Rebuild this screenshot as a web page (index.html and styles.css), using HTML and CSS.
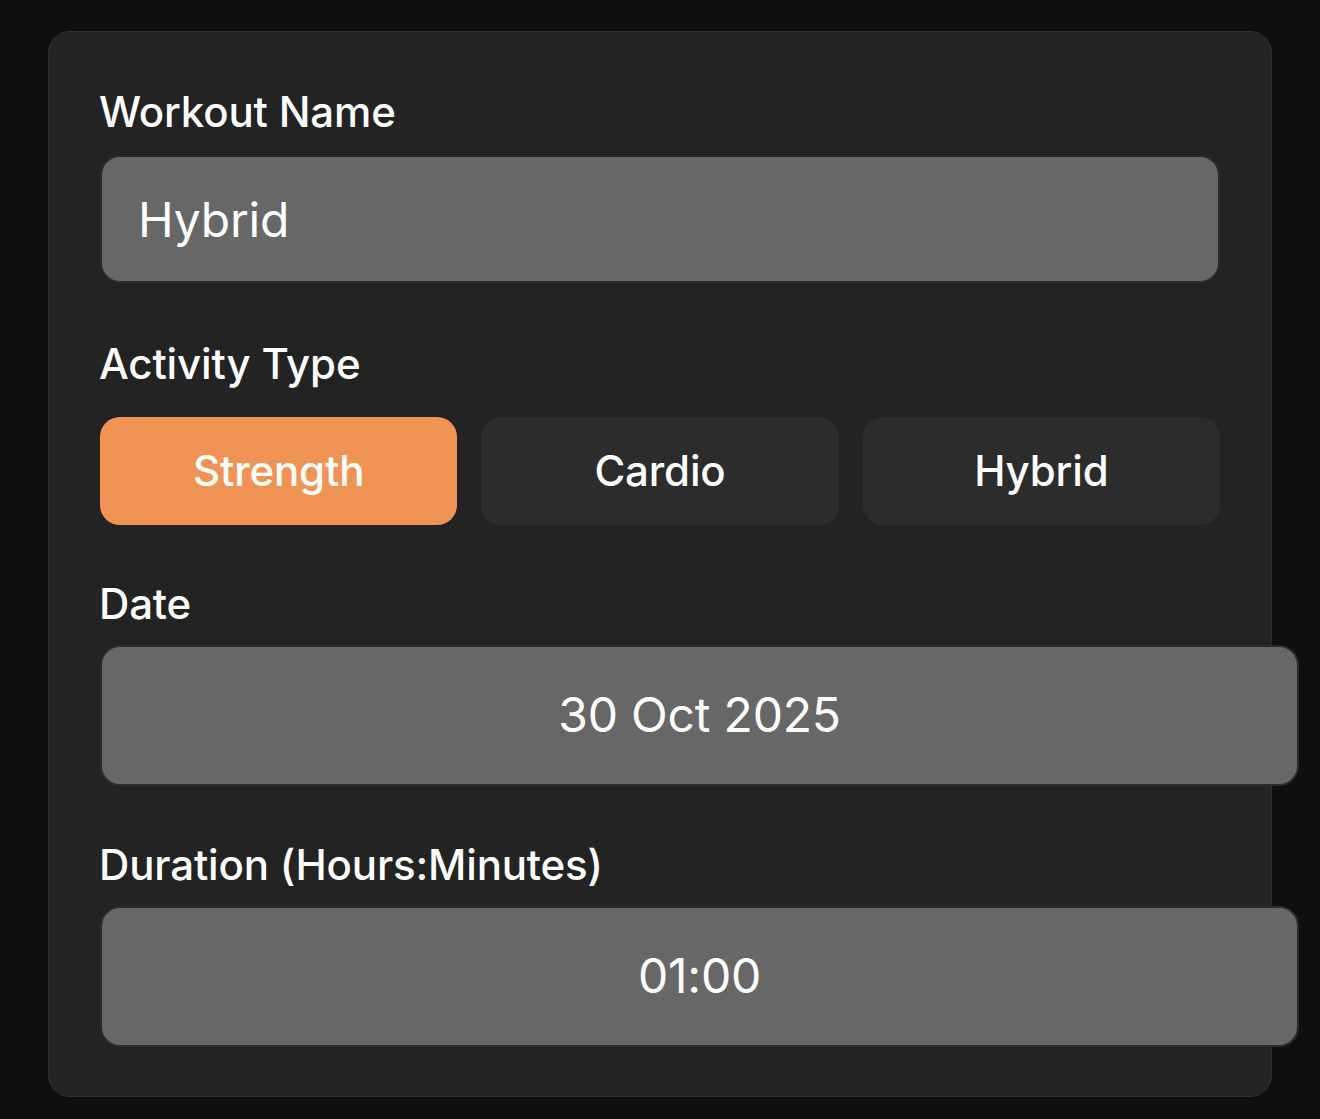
FILE: index.html
```html
<!DOCTYPE html>
<html lang="en">
<head>
<meta charset="utf-8">
<title>Workout</title>
<link rel="stylesheet" href="styles.css">
</head>
<body>
<div class="card">
  <div class="field">
    <label class="label">Workout Name</label>
    <div class="input input-name">Hybrid</div>
  </div>
  <div class="field field-activity">
    <label class="label">Activity Type</label>
    <div class="segments">
      <button class="seg seg-active">Strength</button>
      <button class="seg">Cardio</button>
      <button class="seg">Hybrid</button>
    </div>
  </div>
  <div class="field field-date">
    <label class="label">Date</label>
    <div class="input input-wide">30 Oct 2025</div>
  </div>
  <div class="field field-duration">
    <label class="label">Duration (Hours:Minutes)</label>
    <div class="input input-wide">01:00</div>
  </div>
</div>
</body>
</html>
```

FILE: styles.css
```css
html, body {
  margin: 0;
  padding: 0;
  background: #0f0f0f;
  font-family: Inter, "Noto Sans", "Liberation Sans", sans-serif;
  color: #ffffff;
}

.card {
  box-sizing: border-box;
  margin: 31px 0 0 48px;
  width: 1224px;
  height: 1066px;
  background: #232323;
  border: 1px solid #2f2f2f;
  border-radius: 22px;
  padding: 54px 51px 0 51px;
}

.field {
  display: flex;
  flex-direction: column;
}

.label {
  display: block;
  font-size: 42px;
  font-weight: 500;
  line-height: 51px;
  margin: 0 0 18px -1px;
  letter-spacing: -0.15px;
}

.input {
  box-sizing: border-box;
  background: #676767;
  border: 2px solid #2b2b2b;
  border-radius: 20px;
  font-size: 48px;
  font-weight: 400;
  letter-spacing: -0.2px;
  display: flex;
  align-items: center;
}

.input-name {
  height: 128px;
  padding-left: 36px;
}

.input-wide {
  width: 1199px;
  height: 141px;
  justify-content: center;
  padding-bottom: 2px;
}

.field-activity {
  margin-top: 55px;
}

.field-activity .label {
  margin-bottom: 28px;
}

.segments {
  display: grid;
  grid-template-columns: repeat(3, 1fr);
  gap: 24px;
}

.seg {
  height: 108px;
  border: none;
  border-radius: 20px;
  background: #2c2c2c;
  color: #ffffff;
  font-family: inherit;
  font-size: 42px;
  font-weight: 500;
  letter-spacing: -0.15px;
  padding: 0 0 2px 0;
}

.seg-active {
  background: #f09456;
}

.field-date {
  margin-top: 53px;
}

.field-date .label,
.field-duration .label {
  margin-bottom: 16px;
}

.field-duration {
  margin-top: 53px;
}
```
